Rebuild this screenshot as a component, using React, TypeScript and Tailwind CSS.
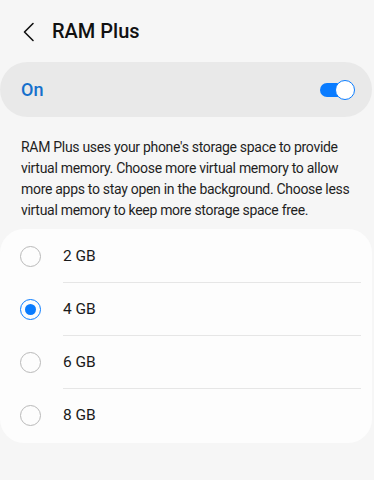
import { useState } from 'react'

const options = ['2 GB', '4 GB', '6 GB', '8 GB']

export default function App() {
  const [selected, setSelected] = useState('4 GB')
  const [on, setOn] = useState(true)

  return (
    <div className="w-[374px] h-[480px] bg-[#f6f6f6] overflow-hidden" style={{ fontFamily: 'Roboto, "Noto Sans", sans-serif' }}>
      <div className="flex items-center h-[62px] pl-[21px]">
        <svg width="14" height="20" viewBox="0 0 14 20" className="mt-[1px]">
          <path d="M12 1.5 L3.5 10 L12 18.5" fill="none" stroke="#111" strokeWidth="1.6" strokeLinecap="round" strokeLinejoin="round" />
        </svg>
        <h1 className="ml-[17px] text-[20px] font-medium text-[#111]">RAM Plus</h1>
      </div>

      <div className="flex items-center justify-between w-[372px] h-[55px] rounded-full bg-[#e9e9e9] pl-[21px] pr-[16px]">
        <span className="text-[18px] font-medium text-[#1570cc]">On</span>
        <button onClick={() => setOn(!on)} className="relative w-[36px] h-[20px]">
          <span className={`absolute left-0 top-[3px] w-[32px] h-[14px] rounded-full ${on ? 'bg-[#0a7cff]' : 'bg-[#b0b0b0]'}`} />
          <span className={`absolute top-0 w-[20px] h-[20px] rounded-full bg-white border ${on ? 'left-[15px] border-[#0a7cff]' : 'left-0 border-[#b0b0b0]'}`} />
        </button>
      </div>

      <p className="px-[21px] pt-[20px] pb-[8px] text-[14px] tracking-[-0.3px] leading-[21px] text-[#1f1f1f]">
        RAM Plus uses your phone's storage space to provide virtual memory. Choose more virtual memory to allow more apps to stay open in the background. Choose less virtual memory to keep more storage space free.
      </p>

      <div className="w-[372px] rounded-[24px] bg-[#fdfdfd] py-[1px]">
        {options.map((o, i) => (
          <div key={o} onClick={() => setSelected(o)} className="flex items-center h-[53px] relative cursor-pointer">
            <span className={`ml-[20px] w-[21px] h-[21px] rounded-full flex items-center justify-center ${selected === o ? 'border-[1.5px] border-[#0a7cff]' : 'border-[1.2px] border-[#b9b9b9]'}`}>
              {selected === o && <span className="w-[11px] h-[11px] rounded-full bg-[#0a7cff]" />}
            </span>
            <span className="ml-[22px] text-[15.5px] text-[#1a1a1a]">{o}</span>
            {i < options.length - 1 && <span className="absolute left-[63px] right-[11px] bottom-0 h-[1px] bg-[#e6e6e6]" />}
          </div>
        ))}
      </div>
    </div>
  )
}
